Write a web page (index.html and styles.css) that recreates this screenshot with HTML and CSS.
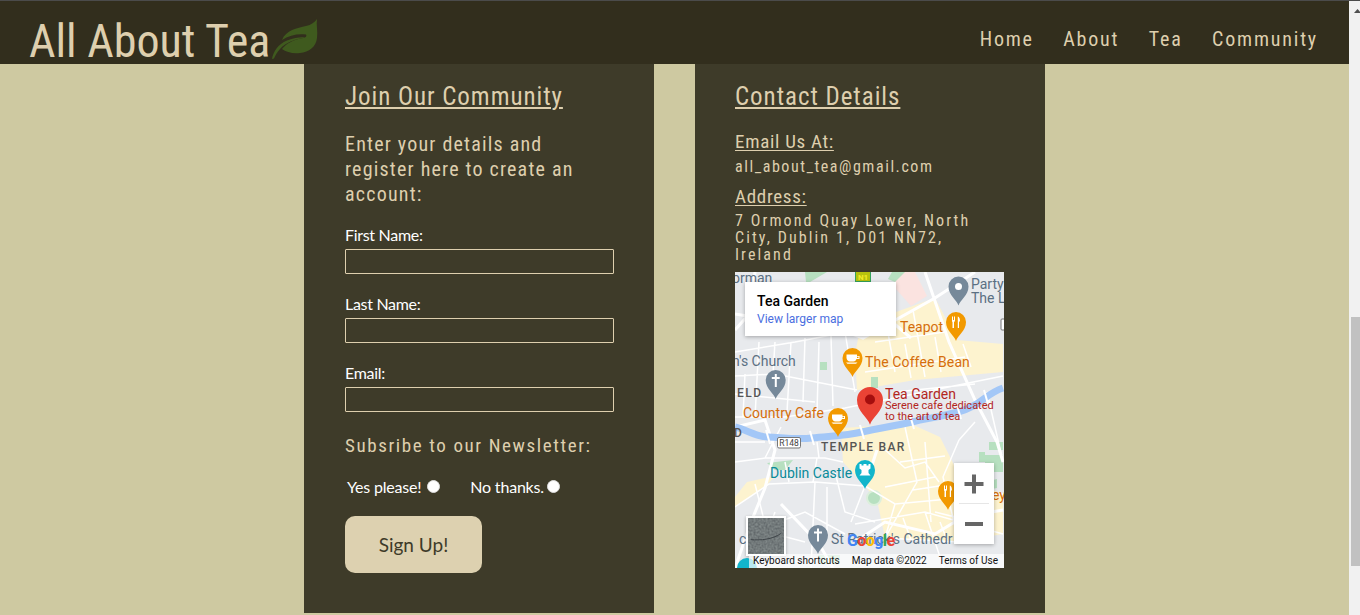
FILE: index.html
```html
<!DOCTYPE html>
<html lang="en">
<head>
<meta charset="utf-8">
<title>All About Tea</title>
<link rel="stylesheet" href="styles.css">
</head>
<body>
<div class="topline"></div>
<div class="window">
  <div class="page">
    <header class="site-header">
      <div class="brand">
        <span class="brand-name">All About Tea</span>
        <svg class="leaf" viewBox="0 0 46 40" aria-hidden="true">
          <path class="leaf-fill" d="M45 0C44 6 46 12 45 19C44 28 37 33 28 34C21 35 14 33 10 30C14 25 20 21 31 19C34 18.500 35 17 34 15.500C26 14.500 17 16 10 21C14 11 25 9 34 7C39 6 43 3 45 0Z"/>
          <path class="leaf-fill" d="M0 40C1 33 6 25 15 21.500C23 18.500 29 18 33 18.500C24 20 14 23 8 30C5 33 3 37 2 39.500Z"/>
        </svg>
      </div>
      <nav class="nav">
        <a>Home</a>
        <a>About</a>
        <a>Tea</a>
        <a>Community</a>
      </nav>
    </header>
    <main class="panels">
      <section class="panel">
        <h2 class="panel-title">Join Our Community</h2>
        <p class="intro">Enter your details and register here to create an account:</p>
        <form class="form">
          <label class="field">First Name:<span class="input"></span></label>
          <label class="field">Last Name:<span class="input"></span></label>
          <label class="field">Email:<span class="input"></span></label>
          <p class="news-title">Subsribe to our Newsletter:</p>
          <div class="radios">
            <span class="radio-item first">Yes please!<i class="radio gap"></i></span>
            <span class="radio-item">No thanks.<i class="radio"></i></span>
          </div>
          <span class="submit">Sign Up!</span>
        </form>
      </section>
      <section class="panel panel-contact">
        <h2 class="panel-title">Contact Details</h2>
        <h3 class="sub first-sub">Email Us At:</h3>
        <p class="detail">all_about_tea@gmail.com</p>
        <h3 class="sub">Address:</h3>
        <p class="detail detail-address">7 Ormond Quay Lower, North City, Dublin 1, D01 NN72, Ireland</p>
        <div class="map">
          <svg class="map-svg" viewBox="0 0 269 296" aria-hidden="false">
            <defs>
              <path id="pin" d="M0 19C-1.500 13.500 -10 9 -10 0A10 10 0 0 1 10 0C10 9 1.500 13.500 0 19Z"/>
              <filter id="sat"><feTurbulence type="fractalNoise" baseFrequency="0.45" numOctaves="2" seed="4"/><feColorMatrix values="0 0 0 0 .22  0 0 0 0 .25  0 0 0 0 .25  1.6 0 0 0 -.2"/></filter>
            </defs>
            <rect class="m-land" width="269" height="296"/>
            <path class="m-pink" d="M160 0H180L192 24L176 34L160 16Z"/>
            <path class="m-green" d="M70 0H92L75 10L71 10Z"/>
            <path class="m-green" d="M157 0H170L160 10L153 7Z"/>
            <path class="m-yellow" d="M124 62L150 44L200 26L222 68L268 72V100L180 108L122 118L120 82Z"/>
            <path class="m-yellow" d="M106 156L176 152L205 165L225 205L268 222V262L222 270L150 266L142 228L108 190Z"/>
            <path class="m-yellow" d="M0 225L12 210L40 204L30 215L0 235Z"/>
            <path class="m-green" d="M85 90H92V98H85Z"/>
            <path class="m-green" d="M136 105H143V116H136Z"/>
            <path class="m-green" d="M32 191L58 188L50 198L40 198Z"/>
            <path class="m-green" d="M254 170H268V178H254ZM244 180H250V190H244ZM250 183H268V200H250ZM250 210L262 207V216L252 218Z"/>
            <circle class="m-green2" cx="139" cy="226" r="7"/>
            <path class="m-green" d="M83 283H105V292H85Z"/>
            <path class="m-road-thin" d="M0 80L60 70L112 60M0 104L40 102L122 118M0 145H50L110 136L268 104M24 70L20 145M56 70L52 140M84 70L82 140M110 60L120 120M150 44L160 100M178 38L190 105M0 122L80 130M0 190L30 186L90 186L108 190M30 186L46 155M82 170L84 186M82 186L78 210M0 235L34 212L80 210L130 214L160 232L268 222M130 214L116 250M160 232L150 266M80 210L76 296M20 212L32 260L70 270M120 252L190 240L268 262M150 266L224 270M190 240L210 300M224 168L208 205L224 270M240 150L224 168M170 155L182 210L150 266M252 120L268 190M148 176L170 196L190 190L204 210M160 120L240 112M140 70L210 60M130 100L230 85M100 200L110 240L140 250M178 218L230 210M44 250L70 240L110 262M200 240L240 250M40 70L38 102M70 66L68 130M96 64L98 134M10 102L8 145M0 170L30 170M50 190L54 210M170 72L176 106M200 65L206 100M228 72L236 95M190 170L196 250M165 190L210 184M150 215L200 205M168 246L176 268M205 250L212 268M245 225L250 262M92 215L92 262M40 240L20 296"/>
            <path class="m-road" d="M20 0L16 40L0 58M112 60L128 66L200 26L240 0M190 0L214 70L240 128L262 170L268 190M0 42L120 62M128 10L150 44L176 66M0 155L30 148L40 178L30 216L16 250L0 296M120 270L150 250L200 262L228 245L268 238M46 232L84 272L98 296M130 214L142 178"/>
            <path class="m-water" d="M0 155C12 158 22 165 33 165S60 168 77 166S110 164 127 160S160 154 177 150S200 146 223 140S250 122 268 116"/>
            <path class="m-bridge" d="M31 158L35 172M75 159L79 173M125 153L129 167M175 143L179 157M222 133L226 147M249 118L253 132"/>
            <rect class="m-shield" x="42.500" y="165.500" width="23" height="10.500" rx="1.500"/>
            <text class="m-shield-text" x="54" y="174">R148</text>
            <rect class="m-n1" x="120" y="0" width="16" height="10"/>
            <rect class="m-n1-in" x="121" y="0" width="14" height="9"/>
            <text class="m-n1-text" x="128" y="8">N1</text>
            <rect class="m-shield" x="266" y="47" width="6" height="11" rx="1"/>

            <use href="#pin" class="p-gray" x="223.500" y="14.500"/>
            <circle class="p-hole" cx="223.500" cy="14.500" r="3.500"/>
            <use href="#pin" class="p-orange" x="221" y="50"/>
            <path class="p-glyph" d="M217 44.500H218V48H219V44.500H220V48C220 49 219.500 50 219 50V56H217.500V50C217 50 217 49 217 48ZM223 44.500C224.500 45 225 47 225 49.500H224V56H222.800V44.500Z"/>
            <use href="#pin" class="p-orange" x="117.500" y="86"/>
            <path class="p-glyph" d="M111.500 82.500H122V84H124.500V87H121.500C121 88.500 120 89.500 118.500 89.500H115C113 89.500 112 88 111.500 86ZM122 84.800V86H123.500V84.800ZM111 90.500H122.500L121 91.800H112.500Z"/>
            <use href="#pin" class="p-gray" x="40.700" y="108"/>
            <path class="p-glyph" d="M39.800 102H41.800V105H44.700V107H41.800V115H39.800V107H36.800V105H39.800Z"/>
            <use href="#pin" class="p-orange" x="103" y="146"/>
            <path class="p-glyph" d="M97 142.500H107.500V144H110V147H107C106.500 148.500 105.500 149.500 104 149.500H100.500C98.500 149.500 97.500 148 97 146ZM107.500 144.800V146H109V144.800ZM96.500 150.500H108L106.500 151.800H98Z"/>
            <use href="#pin" class="p-red" x="135" y="128" transform="translate(135 128) scale(1.300) translate(-135 -128)"/>
            <circle class="p-dark-red" cx="135" cy="127.500" r="5"/>
            <use href="#pin" class="p-teal" x="130" y="198"/>
            <path class="p-glyph" d="M124.500 192H126.500V193.500H128.500V192H131.500V193.500H133.500V192H135.500V196.500L133.500 198V201L135.500 203.500H124.500L126.500 201V198L124.500 196.500Z"/>
            <use href="#pin" class="p-orange" x="213" y="219"/>
            <path class="p-glyph" d="M209 213.500H210V217H211V213.500H212V217C212 218 211.500 219 211 219V225H209.500V219C209 219 209 218 209 217ZM215 213.500C216.500 214 217 216 217 218.500H216V225H214.800V213.500Z"/>
            <use href="#pin" class="p-gray" x="83" y="263"/>
            <path class="p-glyph" d="M82 256.500H84V259.500H87V261.500H84V269.500H82V261.500H79V259.500H82Z"/>
            <use href="#pin" class="p-teal" x="12" y="296"/>

            <text class="t-gray" x="-3" y="11">orman</text>
            <text class="t-gray" x="236" y="17">Party</text>
            <text class="t-gray" x="236" y="31">The L</text>
            <text class="t-orange" x="165" y="60">Teapot</text>
            <text class="t-orange t-wide" x="130" y="95">The Coffee Bean</text>
            <text class="t-gray" x="-3" y="94">n's Church</text>
            <text class="t-area" x="2" y="125">ELD</text>
            <text class="t-orange" x="8" y="146">Country Cafe</text>
            <text class="t-red" x="150" y="127">Tea Garden</text>
            <text class="t-red-small" x="150" y="137">Serene cafe dedicated</text>
            <text class="t-red-small" x="150" y="148">to the art of tea</text>
            <text class="t-area" x="-1" y="165">D</text>
            <text class="t-area t-bar" x="86" y="179">TEMPLE BAR</text>
            <text class="t-teal" x="35" y="206">Dublin Castle</text>
            <text class="t-orange" x="257" y="228">ey</text>
            <text class="t-gray t-cath" x="96" y="272">St Patrick's Cathedr</text>
            <text class="t-gray" x="4" y="272">c</text>
            <text class="t-google" x="112" y="274"><tspan class="g-blue">G</tspan><tspan class="g-red">o</tspan><tspan class="g-yellow">o</tspan><tspan class="g-blue">g</tspan><tspan class="g-green">l</tspan><tspan class="g-red">e</tspan></text>
          </svg>
          <div class="map-card">
            <div class="map-card-title">Tea Garden</div>
            <div class="map-card-link">View larger map</div>
          </div>
          <div class="map-zoom">
            <svg class="map-zoom-svg" viewBox="0 0 40 81" aria-hidden="true">
              <path class="zoom-glyph" d="M18 11.500H22V19H29.500V23H22V30.500H18V23H10.500V19H18Z"/>
              <rect class="zoom-sep" x="5" y="40" width="30" height="1"/>
              <rect class="zoom-glyph" x="11" y="59" width="18" height="4"/>
            </svg>
          </div>
          <svg class="map-thumb" viewBox="0 0 40 40" aria-hidden="true">
            <rect class="thumb-base" width="40" height="40"/>
            <rect width="40" height="40" filter="url(#sat)"/>
            <path class="thumb-river" d="M3 24C14 25 27 24 37 17"/>
          </svg>
          <div class="map-attr">
            <span>Keyboard shortcuts</span>
            <span>Map data ©2022</span>
            <span>Terms of Use</span>
          </div>
        </div>
      </section>
    </main>
  </div>
  <div class="scrollbar">
    <svg class="scroll-arrow" viewBox="0 0 7 4" aria-hidden="true"><path d="M3.500 0L7 4H0Z"/></svg>
    <div class="scroll-thumb"></div>
  </div>
</div>
</body>
</html>
```

FILE: styles.css
```css
* { box-sizing: border-box; }
html, body { margin: 0; height: 100%; overflow: hidden; }
body {
  display: flex;
  flex-direction: column;
  background: #cec9a1;
  font-family: "Roboto Condensed", "Lato", sans-serif;
  color: #decfae;
}
.topline { height: 1px; background: #4b4b4b; flex: none; }
.window { flex: 1; display: flex; min-height: 0; }
.page { flex: 1; min-width: 0; display: flex; flex-direction: column; }

.site-header {
  height: 63px;
  flex: none;
  background: #322e1d;
  display: flex;
  justify-content: space-between;
  padding: 0 31px 0 29px;
}
.brand { display: flex; align-items: flex-start; padding-top: 18px; }
.brand-name { font-size: 46px; line-height: 44px; font-weight: 400; letter-spacing: 0; color: #decfae; }
.leaf { width: 46px; height: 40px; margin-left: 2px; }
.leaf-fill { fill: #3f5a1e; }
.nav { display: flex; gap: 29.500px; padding-top: 26px; }
.nav a { font-size: 20px; line-height: 24px; font-weight: 400; letter-spacing: 1.8px; color: #decfae; }

.panels { flex: 1; display: flex; justify-content: center; gap: 41px; padding-bottom: 2px; min-height: 0; }
.panel { width: 350px; background: #3e3b29; padding: 18px 40px 0 41px; }
.panel-contact { padding-left: 40px; }
.panel-title { margin: 0; font-size: 25px; line-height: 30px; font-weight: 400; letter-spacing: 0.95px; text-decoration: underline; text-decoration-thickness: 2px; text-underline-offset: 2px; }
.intro { max-width: 240px; margin: 20px 0 0; font-size: 20px; line-height: 25px; font-weight: 400; letter-spacing: 1.2px; }
.form { display: flex; flex-direction: column; align-items: flex-start; margin-top: 16px; }
.field { display: block; width: 269px; height: 69px; font-family: "Lato", sans-serif; font-size: 16px; line-height: 24px; letter-spacing: -0.3px; color: #fff; }
.input { display: block; width: 269px; height: 25px; margin-top: 2px; border: 1px solid #decfae; border-radius: 1px; }
.news-title { margin: 4px 0 0; font-size: 19px; line-height: 24px; letter-spacing: 1.6px; font-weight: 400; white-space: nowrap; }
.radios { display: flex; gap: 30px; margin: 17px 0 0 2px; height: 24px; font-family: "Lato", sans-serif; font-size: 16px; line-height: 24px; letter-spacing: -0.2px; color: #fff; }
.radio-item { display: flex; align-items: center; }
.radio { display: block; width: 13px; height: 13px; margin-left: 3px; border-radius: 50%; background: #fff; border: 1px solid #ddd; position: relative; top: -1px; }
.radio.gap { margin-left: 6px; }
.submit { display: flex; align-items: center; justify-content: center; width: 137px; height: 57px; margin-top: 17px; border-radius: 10px; background: #ddd1b0; color: #3e3b29; font-family: "Lato", sans-serif; font-size: 19px; }

.sub { margin: 0; font-size: 19px; line-height: 24px; font-weight: 400; letter-spacing: 0.7px; text-decoration: underline; text-underline-offset: 2px; }
.first-sub { margin-top: 18px; }
.detail { margin: 0 0 10px; font-size: 16px; line-height: 17px; letter-spacing: 1.55px; padding-top: 4px; }
.detail-address { max-width: 250px; margin-bottom: 0; padding-top: 3px; letter-spacing: 2.1px; }

.map { position: relative; width: 269px; height: 296px; margin-top: 9px; overflow: hidden; font-family: "Roboto", sans-serif; }
.map-svg { display: block; width: 269px; height: 296px; font-family: "Roboto", sans-serif; }
.m-land { fill: #e8eaed; }
.m-pink { fill: #fbe3e0; }
.m-green { fill: #b7e0c0; }
.m-green2 { fill: #b7e0c0; stroke: #dcefdc; stroke-width: 2; }
.m-yellow { fill: #fdf3cf; }
.m-road { fill: none; stroke: #fff; stroke-width: 3; }
.m-road-thin { fill: none; stroke: #fff; stroke-width: 1.500; }
.m-water { fill: none; stroke: #a3c7f7; stroke-width: 7; }
.m-bridge { fill: none; stroke: #fff; stroke-width: 2; }
.m-shield { fill: #fff; stroke: #777; stroke-width: 1; }
.m-shield-text { font-size: 8.500px; fill: #444; text-anchor: middle; }
.m-n1 { fill: #35a35c; }
.m-n1-in { fill: #b7c20e; }
.m-n1-text { font-size: 8px; font-weight: 700; fill: #f4ec2a; text-anchor: middle; }
.p-gray { fill: #76899a; }
.p-orange { fill: #f29900; }
.p-red { fill: #ea4335; }
.p-dark-red { fill: #a50e0e; }
.p-teal { fill: #12b5cb; }
.p-hole { fill: #fff; }
.p-glyph { fill: #fff; }
.t-gray { font-size: 14px; fill: #5b7083; }
.t-orange { font-size: 14px; fill: #d56e0c; }
.t-wide { letter-spacing: 0.1px; }
.t-red { font-size: 14px; fill: #b3261e; }
.t-red-small { font-size: 11px; fill: #b3261e; }
.t-teal { font-size: 14px; fill: #0a8a9a; }
.t-area { font-size: 12px; font-weight: 500; fill: #555; letter-spacing: 1.5px; }
.t-bar { letter-spacing: 1.3px; }
.t-google { font-size: 16px; font-weight: 700; letter-spacing: -0.6px; }
.g-blue { fill: #4285f4; }
.g-red { fill: #ea4335; }
.g-yellow { fill: #fbbc05; }
.g-green { fill: #34a853; }

.map-card { position: absolute; left: 10px; top: 10px; width: 151px; height: 54px; background: #fff; box-shadow: 0 1px 4px rgba(0,0,0,.3); padding: 11px 12px; }
.map-card-title { font-size: 14px; line-height: 16px; font-weight: 500; color: #000; }
.map-card-link { font-size: 12px; line-height: 14px; margin-top: 3px; color: #4a6ee0; }
.map-zoom { position: absolute; left: 219px; top: 191px; width: 40px; height: 81px; background: #fff; box-shadow: 0 1px 4px rgba(0,0,0,.3); }
.map-zoom-svg { display: block; width: 40px; height: 81px; }
.zoom-glyph { fill: #666; }
.zoom-sep { fill: #e6e6e6; }
.map-thumb { position: absolute; left: 11px; top: 244px; width: 40px; height: 40px; border: 2px solid #fff; box-shadow: 0 1px 3px rgba(0,0,0,.3); }
.thumb-base { fill: #5d6366; }
.thumb-river { fill: none; stroke: #3a4044; stroke-width: 1; }
.map-attr { position: absolute; right: 0; bottom: 0; left: 14px; height: 14px; display: flex; justify-content: space-between; padding: 0 6px 0 4px; background: rgba(255,255,255,.7); font-size: 10px; line-height: 14px; color: #111; }

.scrollbar { position: relative; width: 11px; flex: none; background: #f1f1f1; }
.scroll-arrow { position: absolute; left: 5px; top: 8px; width: 7px; height: 4px; fill: #505050; }
.scroll-thumb { position: absolute; left: 2px; right: 0; top: 316px; height: 249px; background: #c1c1c1; }
```
